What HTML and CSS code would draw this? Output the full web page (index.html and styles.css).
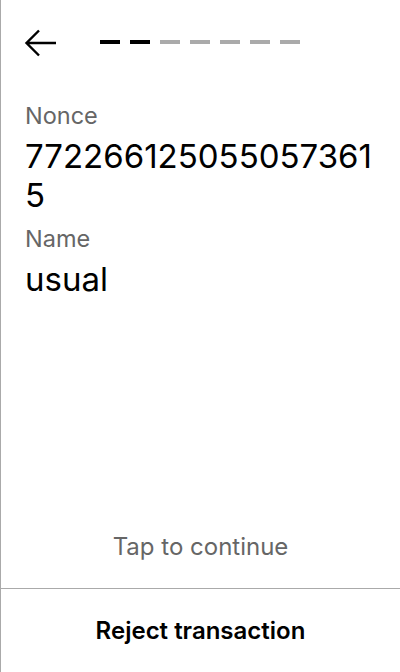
FILE: index.html
```html
<!DOCTYPE html>
<html>
<head>
<meta charset="utf-8">
<link rel="stylesheet" href="styles.css">
</head>
<body>
<div class="screen">
  <div class="header">
    <svg class="back" width="34" height="30" viewBox="0 0 34 30">
      <path d="M32 15 H3 M15 2.5 L2.5 15 L15 27.5" fill="none" stroke="#000" stroke-width="2.4"/>
    </svg>
    <div class="progress">
      <span class="dash on"></span><span class="dash on"></span><span class="dash"></span><span class="dash"></span><span class="dash"></span><span class="dash"></span><span class="dash"></span>
    </div>
  </div>
  <div class="content">
    <div class="label">Nonce</div>
    <div class="value">7722661250550573615</div>
    <div class="label">Name</div>
    <div class="value">usual</div>
  </div>
  <div class="tap">Tap to continue</div>
  <div class="footer">Reject transaction</div>
</div>
</body>
</html>
```
FILE: styles.css
```css
html, body {
  margin: 0;
  padding: 0;
  background: #fff;
}
.screen {
  width: 399px;
  height: 672px;
  border-left: 1px solid #aaa;
  display: flex;
  flex-direction: column;
  font-family: Inter, "Noto Sans", sans-serif;
  color: #000;
}
.header {
  display: flex;
  align-items: center;
  height: 86px;
  padding-left: 23px;
}
.back {
  display: block;
}
.progress {
  display: flex;
  gap: 10px;
  margin-left: 42px;
  margin-top: -2px;
}
.dash {
  width: 20px;
  height: 4px;
  background: #aaa;
}
.dash.on {
  background: #000;
}
.content {
  padding: 8px 24px 0 24px;
  flex: 1;
}
.label {
  font-size: 23.5px;
  line-height: 43px;
  color: #666;
}
.value {
  font-size: 33px;
  line-height: 39px;
  margin-bottom: 2px;
  word-break: break-all;
}
.tap {
  text-align: center;
  font-size: 24px;
  line-height: 30px;
  color: #666;
  padding-bottom: 26px;
}
.footer {
  border-top: 1px solid #aaa;
  height: 83px;
  display: flex;
  align-items: center;
  justify-content: center;
  font-size: 24px;
  font-weight: 600;
}
```
